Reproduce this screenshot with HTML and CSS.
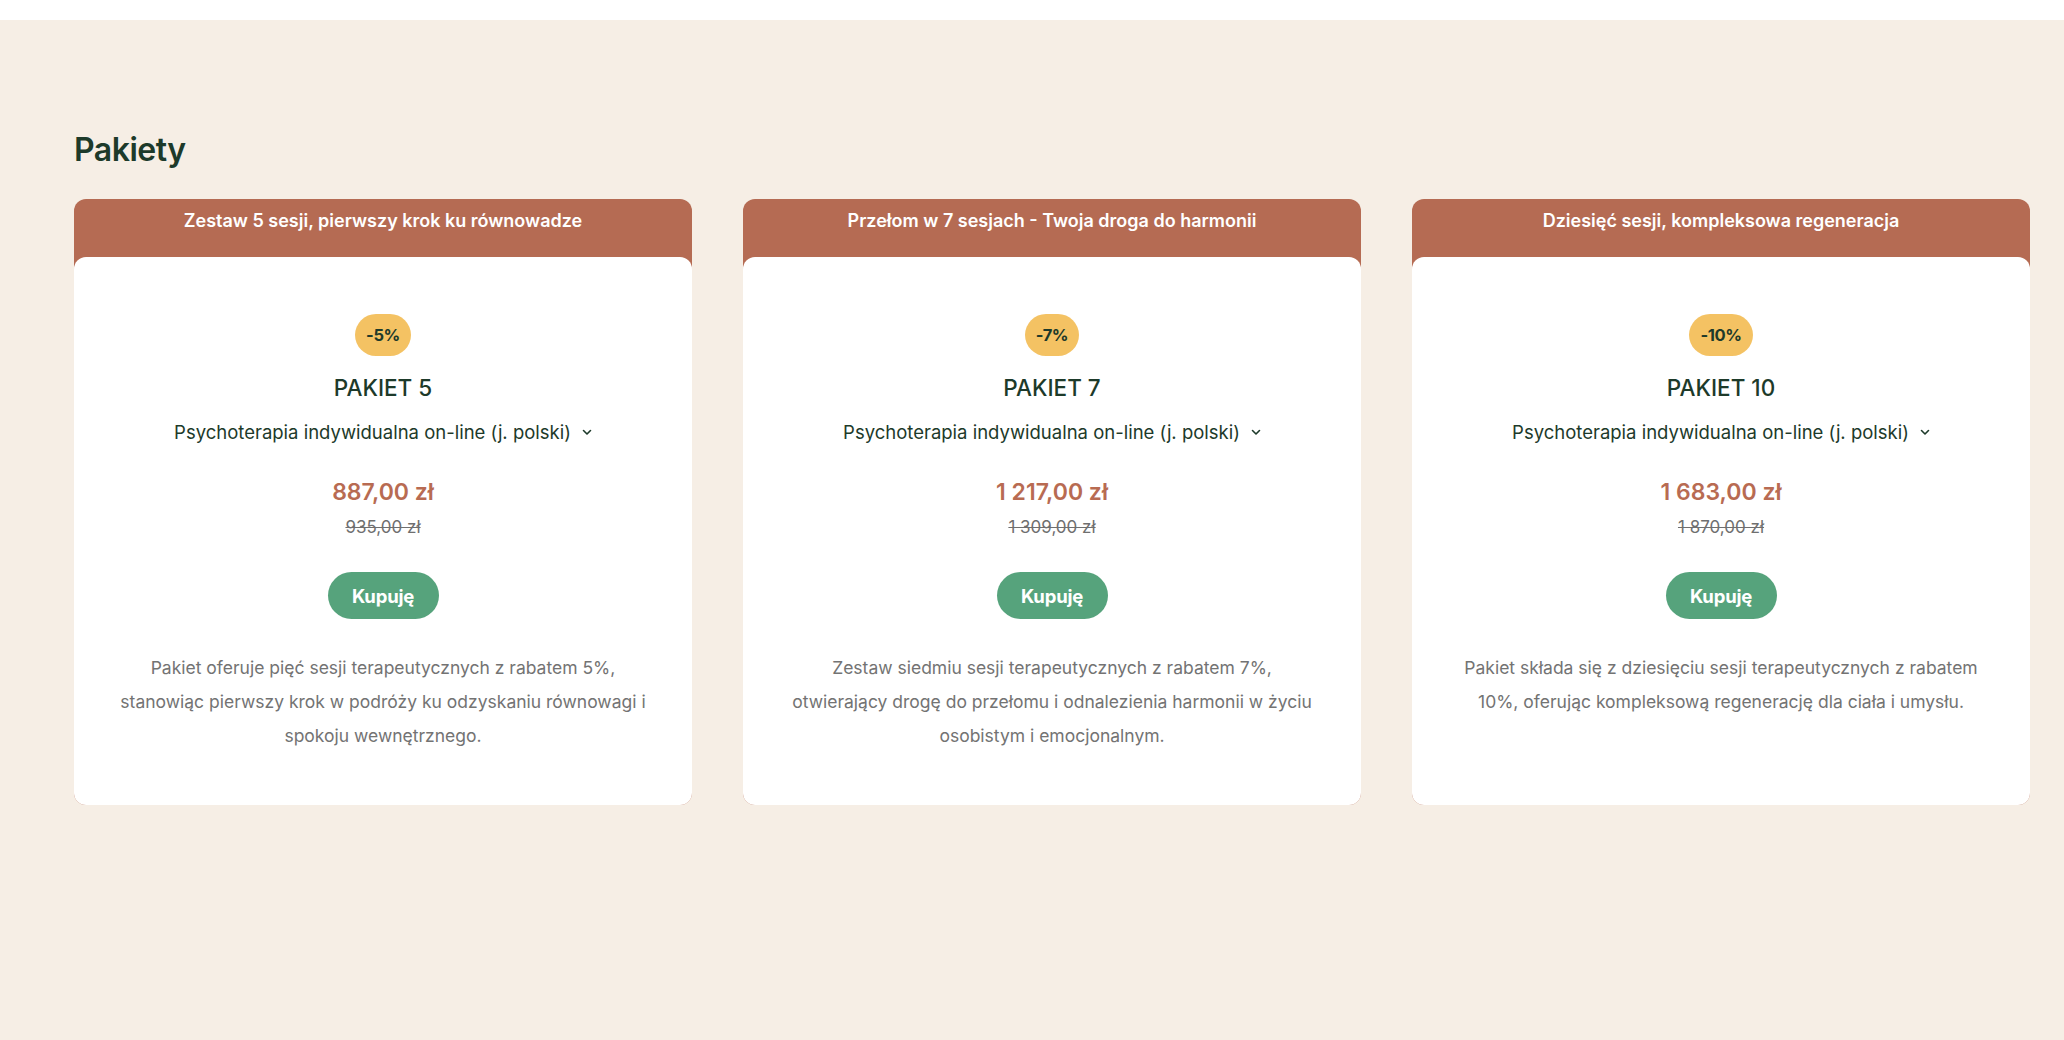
FILE: index.html
```html
<!DOCTYPE html>
<html lang="pl">
<head>
<meta charset="utf-8">
<title>Pakiety</title>
<link rel="stylesheet" href="styles.css">
</head>
<body>
<div class="topbar"></div>
<main class="section">
  <h2 class="section-title">Pakiety</h2>
  <div class="cards">
    <article class="card">
      <div class="card-head">Zestaw 5 sesji, pierwszy krok ku równowadze</div>
      <div class="card-body">
        <span class="badge">-5%</span>
        <h3 class="card-title">PAKIET 5</h3>
        <div class="variant">Psychoterapia indywidualna on-line (j. polski)
          <svg class="chev" width="10" height="7" viewBox="0 0 10 7"><path d="M1.5 1.5 L5 5 L8.5 1.5" fill="none" stroke="#1d3a2a" stroke-width="1.6" stroke-linecap="round" stroke-linejoin="round"/></svg>
        </div>
        <div class="price">887,00 zł</div>
        <div class="old-price">935,00 zł</div>
        <button class="buy">Kupuję</button>
        <p class="desc">Pakiet oferuje pięć sesji terapeutycznych z rabatem 5%, stanowiąc pierwszy krok w podróży ku odzyskaniu równowagi i spokoju wewnętrznego.</p>
      </div>
    </article>
    <article class="card">
      <div class="card-head">Przełom w 7 sesjach - Twoja droga do harmonii</div>
      <div class="card-body">
        <span class="badge">-7%</span>
        <h3 class="card-title">PAKIET 7</h3>
        <div class="variant">Psychoterapia indywidualna on-line (j. polski)
          <svg class="chev" width="10" height="7" viewBox="0 0 10 7"><path d="M1.5 1.5 L5 5 L8.5 1.5" fill="none" stroke="#1d3a2a" stroke-width="1.6" stroke-linecap="round" stroke-linejoin="round"/></svg>
        </div>
        <div class="price">1 217,00 zł</div>
        <div class="old-price">1 309,00 zł</div>
        <button class="buy">Kupuję</button>
        <p class="desc">Zestaw siedmiu sesji terapeutycznych z rabatem 7%, otwierający drogę do przełomu i odnalezienia harmonii w życiu osobistym i emocjonalnym.</p>
      </div>
    </article>
    <article class="card">
      <div class="card-head">Dziesięć sesji, kompleksowa regeneracja</div>
      <div class="card-body">
        <span class="badge">-10%</span>
        <h3 class="card-title">PAKIET 10</h3>
        <div class="variant">Psychoterapia indywidualna on-line (j. polski)
          <svg class="chev" width="10" height="7" viewBox="0 0 10 7"><path d="M1.5 1.5 L5 5 L8.5 1.5" fill="none" stroke="#1d3a2a" stroke-width="1.6" stroke-linecap="round" stroke-linejoin="round"/></svg>
        </div>
        <div class="price">1 683,00 zł</div>
        <div class="old-price">1 870,00 zł</div>
        <button class="buy">Kupuję</button>
        <p class="desc">Pakiet składa się z dziesięciu sesji terapeutycznych z rabatem 10%, oferując kompleksową regenerację dla ciała i umysłu.</p>
      </div>
    </article>
  </div>
</main>
</body>
</html>
```

FILE: styles.css
```css
* { box-sizing: border-box; }
html, body { margin: 0; padding: 0; }
body {
  background: #f6eee5;
  font-family: "Inter", "Noto Sans", sans-serif;
  color: #1d3a2a;
  min-height: 1040px;
}
.topbar { height: 20px; background: #ffffff; }
.section { padding: 111px 33px 0 74px; }
.section-title {
  margin: 0;
  font-size: 32px;
  line-height: 38px;
  font-weight: 600;
  color: #1d3a2a;
  letter-spacing: -0.5px;
}
.cards {
  margin-top: 30px;
  display: grid;
  grid-template-columns: repeat(3, 618px);
  column-gap: 51px;
}
.card {
  background: #b56b53;
  border-radius: 12px;
  display: flex;
  flex-direction: column;
}
.card-head {
  height: 58px;
  padding-top: 10px;
  text-align: center;
  color: #ffffff;
  font-size: 18px;
  line-height: 24px;
  font-weight: 600;
}
.card-body {
  background: #ffffff;
  border-radius: 12px;
  height: 548px;
  display: flex;
  flex-direction: column;
  align-items: center;
  padding: 57px 40px 0;
  text-align: center;
}
.badge {
  display: inline-flex;
  align-items: center;
  justify-content: center;
  height: 42px;
  padding: 0 11px;
  min-width: 50px;
  border-radius: 21px;
  background: #f4c263;
  color: #1d3a2a;
  font-weight: 700;
  font-size: 16.5px;
  letter-spacing: -0.4px;
}
.card-title {
  margin: 16px 0 0;
  font-size: 22.5px;
  line-height: 32px;
  font-weight: 500;
  color: #1d3a2a;
}
.variant {
  margin-top: 16px;
  font-size: 18.5px;
  line-height: 24px;
  color: #1d3a2a;
  display: flex;
  align-items: center;
  gap: 11px;
}
.chev { display: block; margin-top: 1px; }
.price {
  margin-top: 33px;
  font-size: 23px;
  line-height: 30px;
  font-weight: 600;
  color: #b86b52;
}
.old-price {
  margin-top: 8px;
  font-size: 17px;
  line-height: 24px;
  color: #6f6f6f;
  text-decoration: line-through;
}
.buy {
  margin-top: 33px;
  height: 47px;
  width: 111px;
  border: none;
  border-radius: 24px;
  background: #56a37c;
  color: #ffffff;
  font-family: "Inter", sans-serif;
  font-weight: 700;
  font-size: 18.5px;
  letter-spacing: -0.2px;
}
.desc {
  margin: 32px 0 0;
  font-size: 17.5px;
  line-height: 34px;
  color: #737373;
  letter-spacing: 0;
}
```
